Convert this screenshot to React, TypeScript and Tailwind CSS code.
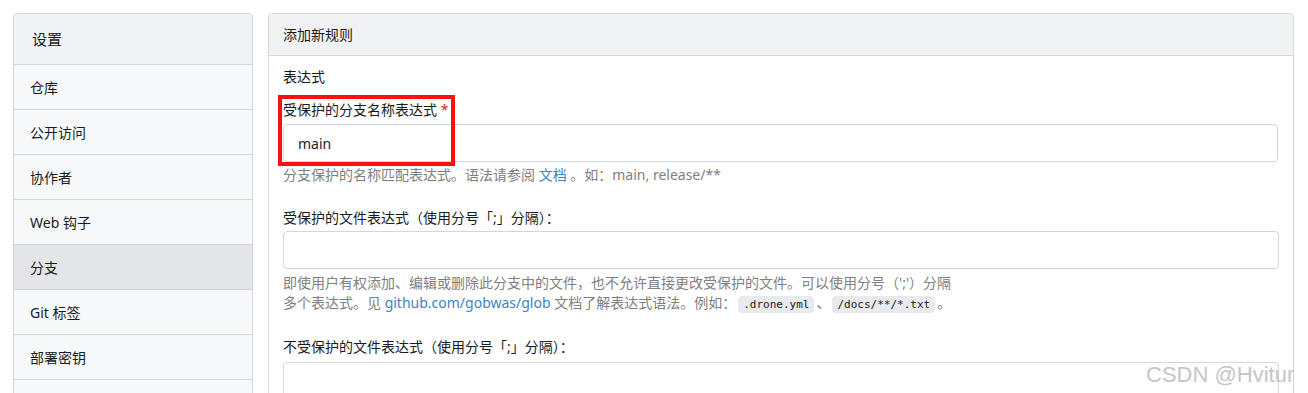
import React from 'react';

const menuItems = ['仓库', '公开访问', '协作者', 'Web 钩子', '分支', 'Git 标签', '部署密钥', ''];

function Sidebar() {
  return (
    <div className="w-[240px] shrink-0 self-start rounded-t-[4px] border border-[#d0d7de] bg-[#f7f8fa]">
      <div className="flex h-[50px] items-center rounded-t-[4px] bg-[#f1f2f4] px-[18px] text-[15px] text-[#181c21]">设置</div>
      {menuItems.map((item, i) => (
        <div
          key={i}
          className={`flex h-[45px] items-center border-t border-[#d0d7de] px-[16px] text-[14px] text-[#181c21] ${
            item === '分支' ? 'bg-[#e4e5e9]' : ''
          }`}
        >
          {item}
        </div>
      ))}
    </div>
  );
}

function Code({ children }: { children: React.ReactNode }) {
  return (
    <code className="mx-[2px] rounded-[4px] bg-[#e9eaee] px-[5px] py-[2px] font-['DejaVu_Sans_Mono',monospace] text-[11px] text-[#181c21]">
      {children}
    </code>
  );
}

function Input({ value }: { value?: string }) {
  return (
    <div className="flex h-[38px] items-center rounded-[4px] border border-[#d0d7de] bg-white px-[14px] text-[14px] text-[#181c21]">
      {value}
    </div>
  );
}

function RulePanel() {
  return (
    <div className="relative flex-1 rounded-t-[4px] border border-[#d0d7de] bg-white">
      <div className="flex h-[42px] items-center rounded-t-[4px] border-b border-[#d0d7de] bg-[#f1f2f4] px-[14px] text-[14px] text-[#181c21]">
        添加新规则
      </div>
      <div className="px-[14px] pt-[11px] text-[14px] text-[#181c21]">
        <div className="leading-[20px]">表达式</div>

        {/* branch name pattern */}
        <div className="mt-[13px]">
          <div className="mb-[4px] leading-[20px]">
            受保护的分支名称表达式 <span className="text-[#db2828]">*</span>
          </div>
          <div className="mr-[1px]">
            <Input value="main" />
          </div>
          <div className="mt-[3px] text-[14px] leading-[20px] text-[#808080]">
            分支保护的名称匹配表达式。语法请参阅 <span className="text-[#4183c4]">文档</span> 。如：main, release/**
          </div>
        </div>

        {/* protected files */}
        <div className="mt-[23px]">
          <div className="mb-[3px] leading-[20px]">受保护的文件表达式（使用分号「;」分隔）：</div>
          <Input />
          <div className="mt-[4px] text-[14px] leading-[20px] text-[#808080]">
            <div>即使用户有权添加、编辑或删除此分支中的文件，也不允许直接更改受保护的文件。可以使用分号（';'）分隔</div>
            <div>
              多个表达式。见 <span className="text-[#4183c4]">github.com/gobwas/glob</span> 文档了解表达式语法。例如：
              <Code>.drone.yml</Code>、<Code>/docs/**/*.txt</Code>。
            </div>
          </div>
        </div>

        {/* unprotected files */}
        <div className="mt-[22px]">
          <div className="mb-[5px] leading-[20px]">不受保护的文件表达式（使用分号「;」分隔）：</div>
          <Input />
        </div>
      </div>

      {/* annotation box */}
      <div className="absolute left-[9px] top-[81px] h-[71px] w-[177px] border-[4px] border-[#ff1010]" />
    </div>
  );
}

export default function App() {
  return (
    <div className="relative h-[393px] w-[1308px] overflow-hidden bg-white font-['Noto_Sans','Noto_Sans_CJK_SC',sans-serif]">
      <div className="flex gap-[15px] pl-[13px] pr-[14px] pt-[13px]">
        <Sidebar />
        <RulePanel />
      </div>
      <div className="absolute left-[1146px] top-[358px] whitespace-nowrap font-['Liberation_Sans',sans-serif] text-[22px] text-[#c0c0c0] opacity-90">
        CSDN @Hvitur
      </div>
    </div>
  );
}
